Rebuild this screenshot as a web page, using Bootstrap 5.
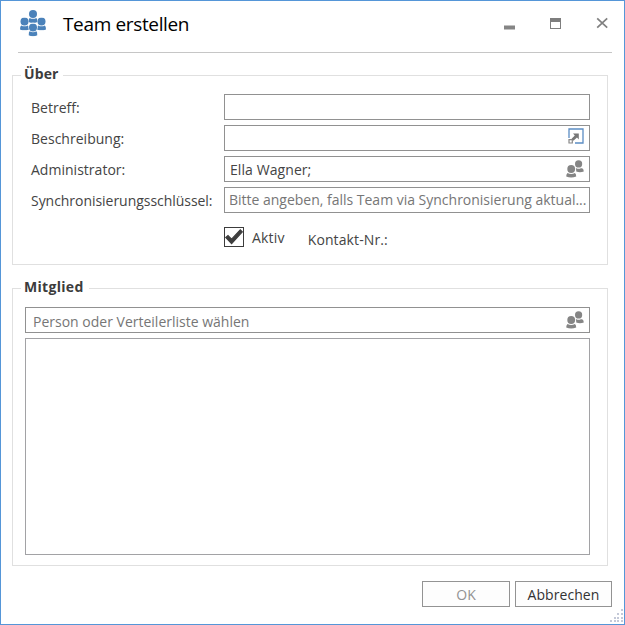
<!DOCTYPE html>
<html lang="de">
<head>
<meta charset="utf-8">
<meta name="viewport" content="width=device-width, initial-scale=1">
<title>Team erstellen</title>
<link href="https://cdn.jsdelivr.net/npm/bootstrap@5.3.0/dist/css/bootstrap.min.css" rel="stylesheet">
<style>
  body { font-family: "Open Sans", "Noto Sans", sans-serif; font-size: 14px; line-height: 20px; color: #444; background: #fff; letter-spacing: .02px; }
  .dialog-window { width: 625px; height: 625px; border: 1px solid #5596d8; overflow: hidden; }
  .title-bar { height: 52px; margin: 0 12px 0 17px; padding-left: 2px; border-bottom: 1px solid #c6c6c6; }
  .title-text { font-size: 19px; line-height: 24px; color: #000; margin: 11px 0 0 17px; letter-spacing: -.35px; font-weight: 400; }
  .team-icon { margin-top: 9px; }
  .window-buttons { margin-top: 16px; margin-right: 3px; gap: 35px; }
  .group-box { border: 1px solid #e0e0e0; width: 596px; margin-left: 11px; }
  .group-about { height: 190px; margin-top: 22px; padding: 18px 17px 0 18px; }
  .group-member { height: 278px; margin-top: 23px; padding: 18px 17px 0 12px; }
  .group-title { top: -12px; left: 8px; padding: 0 5px 0 3px; background: #fff; font-weight: 700; letter-spacing: .3px; color: #3c3c3c; }
  .title-about { letter-spacing: .1px; }
  .form-grid { row-gap: 5px; }
  .field-label { width: 193px; padding-top: 4px; white-space: nowrap; }
  .label-long { letter-spacing: -.04px; }
  .field-row { height: 26px; }
  .field-box.form-control { height: 26px; min-height: 26px; border: 1px solid #919191; font-size: 14px; line-height: 20px; padding: 0 5px; color: #444; letter-spacing: .08px; box-shadow: none; }
  .field-box.form-control::placeholder { color: #767676; opacity: 1; }
  .sync-input.form-control { padding: 0 0 1px 4px; text-overflow: ellipsis; letter-spacing: -.01px; }
  .member-input.form-control { padding: 3px 7px 0 7px; letter-spacing: 0; }
  .field-icon { right: 6px; top: 4px; pointer-events: none; }
  .expand-icon { right: 5px; top: 3px; }
  .check-row { margin: 14px 0 0 193px; }
  .check-box { width: 20px; height: 20px; border: 1px solid #3c3c3c; }
  .check-text { padding-top: 1px; letter-spacing: .2px; }
  .contact { margin-left: 23px; padding-top: 3px; letter-spacing: .1px; }
  .member-list { height: 217px; margin-top: 5px; border: 1px solid #a2a2a5; }
  .dialog-actions { margin: 15px 12px 0 0; gap: 5px; }
  .dialog-btn.btn { height: 26px; padding: 0; border: 1px solid #939393; background: #fdfdfd; color: #333; font-size: 14px; line-height: 23px; letter-spacing: .06px; opacity: 1; }
  .dialog-btn.btn:disabled { color: #929292; background: #fdfdfd; border-color: #939393; opacity: 1; }
  .btn-ok { width: 88px; }
  .btn-cancel { width: 97px; }
  .size-grip { right: 0; bottom: 1px; }
</style>
</head>
<body class="m-0">
<svg class="d-none" aria-hidden="true">
  <symbol id="people" viewBox="0 0 18 18">
    <g fill="#858585">
      <circle cx="12.6" cy="3.9" r="3.6"/>
      <path d="M9.8 8.2h.7q2.1 1.2 4.4 0h1.3q1.6 1 1.6 3.4-3.8 1.5-7.6 0Q10.4 9.8 9.8 8.2Z"/>
      <circle cx="5.2" cy="9" r="3.9" />
      <path d="M1.5 13.1q3.7 1.8 7.4 0 1.4 1.1 1.3 3.4-5 2-10 0 0-2.3 1.3-3.4Z"/>
    </g>
  </symbol>
  <symbol id="member" viewBox="0 0 9 13">
    <circle cx="4.5" cy="4" r="4"/>
    <path d="M1.1 7.9q3.4 1.9 6.8 0 1.1 1.2 1.1 4-4.5 1.7-9 0 0-2.8 1.1-4Z"/>
  </symbol>
</svg>

<div class="dialog-window position-relative d-flex flex-column">
  <header class="title-bar d-flex align-items-start flex-shrink-0">
    <svg class="team-icon flex-shrink-0" width="26" height="27" viewBox="0 0 26 27" fill="#4b82ba">
      <use href="#member" x="8.5" y="0" width="9" height="13"/>
      <use href="#member" x="0" y="7.5" width="9" height="13"/>
      <use href="#member" x="17" y="7.5" width="9" height="13"/>
      <circle cx="13" cy="17.4" r="4.6" fill="#fff"/>
      <use href="#member" x="8.5" y="13.4" width="9" height="13"/>
    </svg>
    <h1 class="title-text">Team erstellen</h1>
    <div class="window-buttons d-flex ms-auto">
      <svg width="11" height="14" aria-label="Minimieren"><path d="M0 8.5h11v4H0Z" fill="#858585"/></svg>
      <svg width="11" height="14" aria-label="Maximieren"><path d="M0 1h11v11H0Z M1 5v6h9V5Z" fill="#7e7e7e" fill-rule="evenodd"/></svg>
      <svg width="13" height="14" aria-label="Schließen"><path d="M1.2 1.3 11.2 10.7M11.2 1.3 1.2 10.7" stroke="#808080" stroke-width="1.7"/></svg>
    </div>
  </header>

  <section class="group-box group-about position-relative flex-shrink-0">
    <div class="group-title title-about position-absolute">Über</div>
    <div class="form-grid d-flex flex-column">
      <div class="field-row d-flex">
        <label class="field-label flex-shrink-0" for="subject">Betreff:</label>
        <input id="subject" class="field-box form-control rounded-0">
      </div>
      <div class="field-row d-flex position-relative">
        <label class="field-label flex-shrink-0" for="description">Beschreibung:</label>
        <input id="description" class="field-box form-control rounded-0">
        <svg class="field-icon expand-icon position-absolute" width="18" height="18" fill="none">
          <path d="M2 10V1h14v14H8" stroke="#5b8dc4" stroke-width="1.3"/>
          <path d="M2 11.7h3.3V15H2Z" stroke="#888" stroke-width="1.2"/>
          <path d="M6 5.4h5.8v6l-1.8-1.8-3.6 3.1-1.8-1.9 3.2-3.4Z" fill="#777"/>
        </svg>
      </div>
      <div class="field-row d-flex position-relative">
        <label class="field-label flex-shrink-0" for="admin">Administrator:</label>
        <input id="admin" class="field-box form-control rounded-0" value="Ella Wagner;">
        <svg class="field-icon position-absolute" width="18" height="18"><use href="#people"/></svg>
      </div>
      <div class="field-row d-flex">
        <label class="field-label label-long flex-shrink-0" for="sync">Synchronisierungsschlüssel:</label>
        <input id="sync" class="field-box sync-input form-control rounded-0" placeholder="Bitte angeben, falls Team via Synchronisierung aktual...">
      </div>
    </div>
    <div class="check-row d-flex">
      <div class="check-box d-flex" role="checkbox" aria-checked="true" aria-label="Aktiv">
        <svg width="18" height="18" viewBox="0 0 18 18"><path d="M.8 9.4 3 7.5l3.6 3.7L15.3 1.8l2 2L6.6 15.7Z" fill="#3e3e3e" stroke="#3e3e3e" stroke-width="1.2"/></svg>
      </div>
      <span class="check-text ms-2">Aktiv</span>
      <span class="contact">Kontakt-Nr.:</span>
    </div>
  </section>

  <section class="group-box group-member position-relative flex-shrink-0">
    <div class="group-title position-absolute">Mitglied</div>
    <div class="position-relative">
      <input class="field-box member-input form-control rounded-0" placeholder="Person oder Verteilerliste wählen">
      <svg class="field-icon position-absolute" width="18" height="18"><use href="#people"/></svg>
    </div>
    <div class="member-list"></div>
  </section>

  <footer class="dialog-actions d-flex justify-content-end">
    <button class="dialog-btn btn-ok btn rounded-0" disabled>OK</button>
    <button class="dialog-btn btn-cancel btn rounded-0">Abbrechen</button>
  </footer>
  <svg class="size-grip position-absolute" width="14" height="14" fill="#c4c9d8">
    <path d="M11 0h2v2h-2ZM7 4h2v2H7ZM11 4h2v2h-2ZM4 8h2v2H4ZM7 8h2v2H7ZM11 8h2v2h-2ZM0 11h2v2H0ZM4 11h2v2H4ZM7 11h2v2H7ZM11 11h2v2h-2Z"/>
  </svg>
</div>
<script src="https://cdn.jsdelivr.net/npm/bootstrap@5.3.0/dist/js/bootstrap.bundle.min.js"></script>
</body>
</html>
